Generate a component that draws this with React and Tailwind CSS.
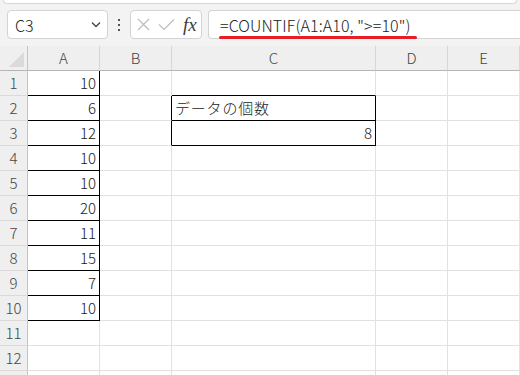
import React from "react";
import clsx from "clsx";

const data = [10, 6, 12, 10, 10, 20, 11, 15, 7, 10];
const font = { fontFamily: '"Noto Sans CJK JP", "Noto Sans", sans-serif' };

function Cell({ w, rb, bb, align, children }) {
  return (
    <div
      className={clsx(
        "flex h-full shrink-0 items-center border-r border-b text-[15px] font-light text-[#1a1a1a]",
        w,
        rb ? "border-r-black" : "border-r-[#e1e1e1]",
        bb ? "border-b-black" : "border-b-[#e1e1e1]",
        align === "right" ? "justify-end pr-[3px]" : "justify-start pl-[3px]"
      )}
    >
      {children}
    </div>
  );
}

function ColHead({ w, label }) {
  return (
    <div
      className={clsx(
        "flex h-full shrink-0 items-center justify-center border-r border-b border-r-[#d6d6d6] border-b-[#b5b5b5] bg-[#efefef] text-[15px] font-light text-[#444]",
        w
      )}
    >
      {label}
    </div>
  );
}

export default function App() {
  const rows = Array.from({ length: 13 }, (_, i) => i + 1);
  return (
    <div className="relative h-[375px] w-[520px] overflow-hidden bg-white" style={font}>
      {/* toolbar */}
      <div className="flex h-[46px] flex-col bg-[#f3f3f3]">
        <div className="mx-[3px] h-[4px] rounded-b-[5px] border border-t-0 border-[#d6d6d6] bg-white" />
        <div className="mt-[6px] flex h-[29px] items-center pl-[7px]">
          <div className="flex h-[29px] w-[101px] items-center justify-between rounded-[4px] border border-[#d3d3d3] bg-white pl-[7px] pr-[6px]">
            <span className="text-[16px] font-light text-[#222]">C3</span>
            <svg width="10" height="7" viewBox="0 0 10 7">
              <path d="M1 1.5 L5 5.5 L9 1.5" fill="none" stroke="#444" strokeWidth="1.3" />
            </svg>
          </div>
          <div className="flex w-[22px] flex-col items-center justify-center gap-[3px]">
            <div className="h-[2px] w-[2px] bg-[#555]" />
            <div className="h-[2px] w-[2px] bg-[#555]" />
            <div className="h-[2px] w-[2px] bg-[#555]" />
          </div>
          <div className="flex h-[29px] w-[72px] items-center rounded-[4px] border border-[#d3d3d3] bg-white pl-[6px]">
            <svg width="13" height="13" viewBox="0 0 13 13">
              <path d="M1 1 L12 12 M12 1 L1 12" stroke="#bdbdbd" strokeWidth="1.2" fill="none" />
            </svg>
            <svg width="17" height="13" viewBox="0 0 17 13" className="ml-[8px]">
              <path d="M1 6.5 L6 11.5 L16 1.5" stroke="#bdbdbd" strokeWidth="1.2" fill="none" />
            </svg>
            <span
              className="ml-[8px] text-[19px] italic leading-none text-[#3c3c3c]"
              style={{ fontFamily: '"Liberation Serif", serif' }}
            >
              fx
            </span>
          </div>
          <div className="ml-[6px] flex h-[29px] flex-1 items-center rounded-l-[4px] border border-r-0 border-[#d3d3d3] bg-white pl-[11px]">
            <span className="text-[16px] font-light tracking-[0.1px] text-[#222]">=COUNTIF(A1:A10, "&gt;=10")</span>
          </div>
        </div>
      </div>
      <div className="absolute left-[219px] top-[36px] h-[3px] w-[198px] rounded-full bg-[#e81e26]" />

      {/* header row */}
      <div className="flex h-[25px]">
        <div className="relative flex h-full w-[28px] shrink-0 items-end justify-end border-r border-b border-r-[#c4c4c4] border-b-[#b5b5b5] bg-[#efefef] pb-[3px] pr-[3px]">
          <svg width="15" height="15" viewBox="0 0 15 15">
            <path d="M15 0 L15 15 L0 15 Z" fill="#dadada" />
          </svg>
        </div>
        <ColHead w="w-[72px]" label="A" />
        <ColHead w="w-[72px]" label="B" />
        <ColHead w="w-[204px]" label="C" />
        <ColHead w="w-[72px]" label="D" />
        <ColHead w="w-[72px]" label="E" />
      </div>

      {/* grid rows */}
      {rows.map((r) => {
        const inA = r <= 10;
        return (
          <div key={r} className="flex h-[25px]">
            <div className="flex h-full w-[28px] shrink-0 items-center justify-center border-r border-b border-r-[#c4c4c4] border-b-[#dadada] bg-[#efefef] text-[15px] font-light text-[#444]">
              {r <= 12 ? r : ""}
            </div>
            <Cell w="w-[72px]" rb={inA} bb={inA} align="right">
              {inA ? data[r - 1] : ""}
            </Cell>
            <Cell w="w-[72px]" rb={r === 2 || r === 3} />
            <Cell
              w="w-[204px]"
              rb={r === 2 || r === 3}
              bb={r === 1 || r === 2 || r === 3}
              align={r === 3 ? "right" : "left"}
            >
              {r === 2 ? <span className="tracking-[0.8px]">データの個数</span> : r === 3 ? "8" : ""}
            </Cell>
            <Cell w="w-[72px]" />
            <Cell w="w-[72px]" />
          </div>
        );
      })}
    </div>
  );
}
